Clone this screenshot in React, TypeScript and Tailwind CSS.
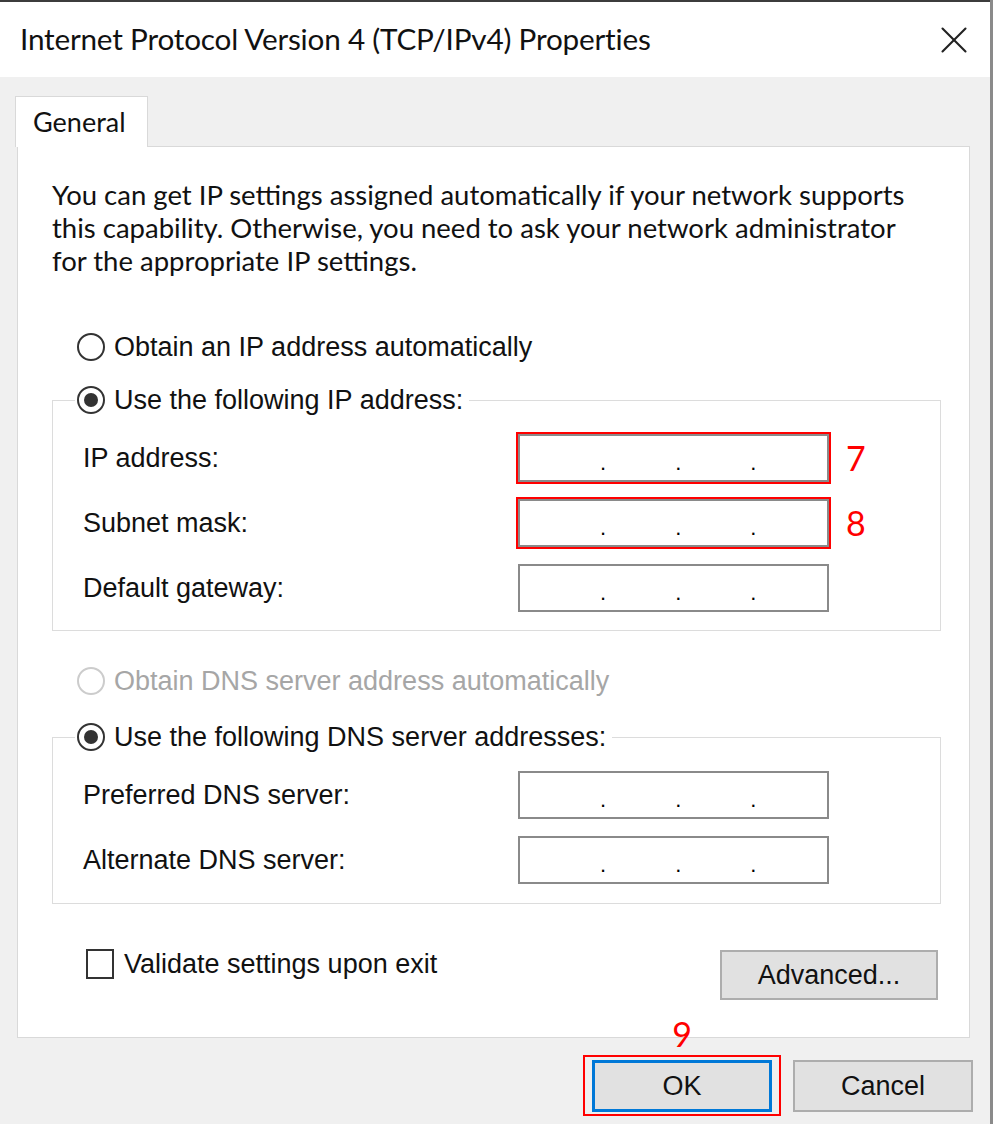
import { X } from 'lucide-react';

const ui = "font-['Liberation_Sans',Arial,sans-serif]";
const segoe = "font-['Lato','Noto_Sans',sans-serif]";

function Radio({ checked = false, disabled = false }: { checked?: boolean; disabled?: boolean }) {
  return (
    <span
      className={`w-[28px] h-[28px] rounded-full border-2 bg-white flex items-center justify-center shrink-0 ${
        disabled ? 'border-[#cccccc]' : 'border-[#333333]'
      }`}
    >
      {checked && <span className="w-[14px] h-[14px] rounded-full bg-[#333333]" />}
    </span>
  );
}

function IpBox({ marker }: { marker?: string }) {
  return (
    <div className="flex items-center">
      <div
        className={`w-[311px] h-[48px] bg-white border-2 border-[#8a8a8a] flex items-end pb-[6px] pl-[80px] gap-[69px] text-[22px] leading-none text-black ${
          marker ? 'outline-2 outline-[#ff0000]' : ''
        }`}
      >
        <span>.</span>
        <span>.</span>
        <span>.</span>
      </div>
      <span className={`w-[99px] pl-[17px] text-[34px] leading-none text-[#ff0000] ${segoe}`}>{marker}</span>
    </div>
  );
}

function FieldRow({ label, marker }: { label: string; marker?: string }) {
  return (
    <div className="flex items-center justify-between">
      <span className="text-[27px] leading-none text-[#111111]">{label}</span>
      <IpBox marker={marker} />
    </div>
  );
}

export default function App() {
  return (
    <div className={`w-[997px] h-[1124px] bg-white flex overflow-hidden ${ui}`}>
      <div className="w-[990px] flex flex-col">
        {/* title bar */}
        <div className="h-[2px] bg-[#3c3c3c]" />
        <div className="h-[75px] bg-white flex items-center justify-between pl-[20px] pr-[13px]">
          <span className={`text-[29.7px] text-[#111111] tracking-[-0.2px] ${segoe}`}>
            Internet Protocol Version 4 (TCP/IPv4) Properties
          </span>
          <X className="w-[46px] h-[46px] text-[#222222]" strokeWidth={1.1} />
        </div>

        {/* body */}
        <div className="flex-1 bg-[#f0f0f0] flex flex-col">
          <div className="pl-[15px] pt-[19px] flex">
            <div
              className={`relative z-10 -mb-px w-[133px] h-[51px] bg-white border border-b-0 border-[#d9d9d9] pl-[17px] pt-[7px] text-[27px] leading-[36px] text-[#111111] ${segoe}`}
            >
              General
            </div>
          </div>

          <div className="ml-[17px] w-[953px] border border-[#d9d9d9] bg-white pl-[34px] pr-[28px] pt-[31px] pb-[37px] flex flex-col">
            <div className={`text-[27.5px] leading-[33px] text-[#111111] ${segoe}`}>
              <div className="whitespace-nowrap">You can get IP settings assigned automatically if your network supports</div>
              <div className="whitespace-nowrap">this capability. Otherwise, you need to ask your network administrator</div>
              <div className="whitespace-nowrap">for the appropriate IP settings.</div>
            </div>

            <div className="mt-[55px] ml-[25px] h-[30px] flex items-center gap-[9px] text-[27px] text-[#111111]">
              <Radio />
              <span>Obtain an IP address automatically</span>
            </div>

            <fieldset className="mt-[23px] border border-[#dcdcdc] pl-[30px] pr-[12px] pb-[18px]">
              <legend className="-ml-[8px] px-[2px] h-[30px] flex items-center gap-[9px] text-[27px] text-[#111111]">
                <Radio checked />
                <span className="pr-[4px]">Use the following IP address:</span>
              </legend>
              <div className="mt-[19px] flex flex-col gap-[17px]">
                <FieldRow label="IP address:" marker="7" />
                <FieldRow label="Subnet mask:" marker="8" />
                <FieldRow label="Default gateway:" />
              </div>
            </fieldset>

            <div className="mt-[35px] ml-[25px] h-[30px] flex items-center gap-[9px] text-[27px] text-[#a6a6a6]">
              <Radio disabled />
              <span>Obtain DNS server address automatically</span>
            </div>

            <fieldset className="mt-[26px] border border-[#dcdcdc] pl-[30px] pr-[12px] pb-[19px]">
              <legend className="-ml-[8px] px-[2px] h-[30px] flex items-center gap-[9px] text-[27px] text-[#111111]">
                <Radio checked />
                <span className="pr-[4px]">Use the following DNS server addresses:</span>
              </legend>
              <div className="mt-[19px] flex flex-col gap-[17px]">
                <FieldRow label="Preferred DNS server:" />
                <FieldRow label="Alternate DNS server:" />
              </div>
            </fieldset>

            <div className="mt-[45px] flex items-start justify-between">
              <div className="ml-[34px] flex items-center gap-[10px] text-[27px] leading-none text-[#111111]">
                <span className="w-[28px] h-[30px] border-2 border-[#333333] bg-white" />
                <span>Validate settings upon exit</span>
              </div>
              <button
                type="button"
                className="mt-[1px] mr-[3px] w-[218px] h-[50px] bg-[#e1e1e1] border-2 border-[#adadad] text-[27px] text-[#111111]"
              >
                Advanced...
              </button>
            </div>
          </div>

          {/* dialog buttons */}
          <div className="mt-[17px] pr-[17px] flex justify-end items-start gap-[12px]">
            <div className="relative border-2 border-[#ff0000] px-[7px] pt-[3px] pb-[2px]">
              <span
                className={`absolute bottom-full left-1/2 -translate-x-1/2 mb-[6px] text-[34px] leading-none text-[#ff0000] ${segoe}`}
              >
                9
              </span>
              <button
                type="button"
                className="w-[180px] h-[52px] bg-[#e1e1e1] border-[3px] border-[#0078d7] text-[27px] text-[#111111]"
              >
                OK
              </button>
            </div>
            <button
              type="button"
              className="mt-[5px] w-[180px] h-[52px] bg-[#e1e1e1] border-2 border-[#adadad] text-[27px] text-[#111111]"
            >
              Cancel
            </button>
          </div>
        </div>
      </div>
      <div className="w-[3px] bg-[#8a8a8a]" />
      <div className="flex-1 bg-white" />
    </div>
  );
}
